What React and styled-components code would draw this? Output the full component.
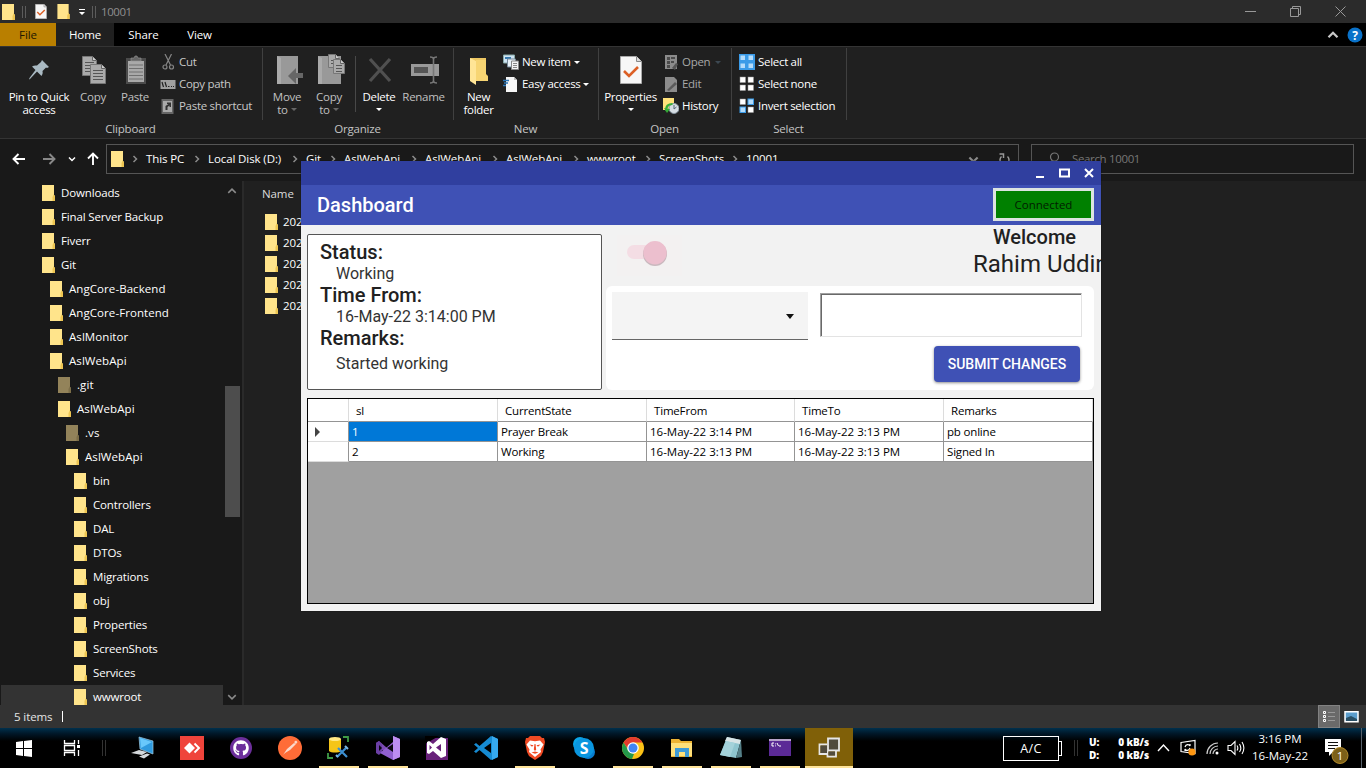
import React from "react";
import styled, { createGlobalStyle } from "styled-components";
import { FaGithub } from "react-icons/fa";

const Global = createGlobalStyle`
  * { box-sizing: border-box; }
  body { margin: 0; background: #000; overflow: hidden; }
  svg { display: block; flex: none; }
`;

const ui = `"Open Sans", "Noto Sans", sans-serif`;

const Desktop = styled.div`
  position: relative;
  width: 1366px;
  height: 768px;
  overflow: hidden;
  display: flex;
  flex-direction: column;
  background: #191919;
  color: #fff;
  font: 11.5px/16px ${ui};
  letter-spacing: -0.1px;
  white-space: nowrap;
`;

/* ---------- Explorer title and tabs ---------- */
const TitleBar = styled.div`
  height: 23px;
  flex: none;
  display: flex;
  align-items: center;
  padding-left: 2px;
  background: #2b2b2b;
  color: #8f8f8f;
`;
const QuickTools = styled.div`
  display: flex;
  align-items: center;
  margin-left: 9px;
  gap: 10px;
`;
const Bars = styled.i`
  width: 4px;
  flex: none;
  height: ${(p) => p.$h || 12}px;
  margin: ${(p) => p.$m};
  border: solid ${(p) => p.$c || "#5c5c5c"};
  border-width: 0 1px;
`;
const Caption = styled.span`
  width: 1144px;
  flex: none;
  letter-spacing: -0.45px;
`;
const CaptionButtons = styled.div`
  display: flex;
  gap: 34px;
`;
const Tabs = styled.div`
  height: 23px;
  flex: none;
  display: flex;
  background: #000;
`;
const Tab = styled.span`
  width: ${(p) => p.$w}px;
  line-height: 24px;
  text-align: center;
  background: ${(p) => p.$bg || "transparent"};
  color: ${(p) => p.$color || "#fff"};
`;
const TabTools = styled.div`
  margin-left: auto;
  display: flex;
  align-items: center;
  gap: 8px;
  padding-right: 3px;
`;

/* ---------- Ribbon ---------- */
const Ribbon = styled.div`
  height: 93px;
  flex: none;
  display: flex;
  background: #202020;
  border-top: 1px solid #343434;
  border-bottom: 1px solid #343434;
  letter-spacing: -0.3px;
`;
const Group = styled.section`
  width: ${(p) => p.$w}px;
  display: flex;
  flex-direction: column;
`;
const GroupTools = styled.div`
  height: 72px;
  margin-top: 1px;
  display: flex;
  padding: 3px 0 0 ${(p) => p.$pad}px;
  border-right: 1px solid #404040;
`;
const GroupName = styled.span`
  text-align: center;
  line-height: 18px;
  letter-spacing: -0.2px;
  padding-right: 2px;
  color: #c4c4c4;
`;
const BigButton = styled.div`
  width: ${(p) => p.$w}px;
  display: flex;
  flex-direction: column;
  align-items: center;
  padding-top: 3px;
  color: ${(p) => (p.$off ? "#c0c0c0" : "#fff")};
  text-align: center;
  line-height: 13px;
`;
const BigIcon = styled.div`
  height: 36px;
  display: flex;
  align-items: flex-start;
  padding: ${(p) => p.$drop || 0}px 0 0 ${(p) => p.$shift || 0}px;
`;
const BigLine = styled.span`
  display: flex;
  align-items: center;
  gap: 3px;
  min-height: 13px;
`;
const Divider = styled.i`
  width: 1px;
  height: 56px;
  margin: 5px 2px 0 5px;
  background: #484848;
`;
const SmallColumn = styled.div`
  display: flex;
  flex-direction: column;
  margin-left: ${(p) => p.$ml || 0}px;
`;
const SmallButton = styled.div`
  height: 22px;
  display: flex;
  align-items: center;
  gap: 3px;
  color: ${(p) => (p.$dim ? "#a8a8a8" : p.$off ? "#c8c8c8" : "#fff")};
`;
const Caret = styled.i`
  border: solid transparent;
  border-width: 3px 3px 0;
  border-top-color: ${(p) => p.$c || "#fff"};
  margin-left: ${(p) => p.$ml || 0}px;
`;

/* ---------- Address row ---------- */
const AddressRow = styled.div`
  height: 42px;
  flex: none;
  display: flex;
  align-items: flex-start;
  padding: 5px 12px 0 12px;
`;
const NavButtons = styled.div`
  width: 94px;
  height: 30px;
  display: grid;
  grid-template-columns: 30px 26px 18px 14px;
  align-items: center;
`;
const AddressBox = styled.div`
  width: 913px;
  height: 30px;
  display: flex;
  align-items: center;
  padding: 0 8px 0 4px;
  border: 1px solid #555;
`;
const Crumb = styled.span`
  width: ${(p) => p.$w}px;
`;
const CrumbSep = styled.span`
  width: 22px;
  display: flex;
  justify-content: center;
`;
const AddressTools = styled.div`
  margin-left: auto;
  display: flex;
  align-items: center;
  gap: 19px;
`;
const SearchBox = styled.div`
  width: 323px;
  height: 30px;
  margin-left: 12px;
  padding-left: 16px;
  display: flex;
  align-items: center;
  gap: 12px;
  border: 1px solid #555;
  color: #777;
  letter-spacing: -0.35px;
`;

/* ---------- Explorer body ---------- */
const Body = styled.div`
  height: 524px;
  flex: none;
  display: flex;
  overflow: hidden;
`;
const Tree = styled.div`
  width: 223px;
  height: 524px;
  overflow: hidden;
`;
const TreeRow = styled.div`
  height: 24px;
  display: flex;
  align-items: center;
  gap: 6px;
  margin-left: 1px;
  padding-left: ${(p) => 41 + p.$level * 8}px;
  letter-spacing: ${(p) => (p.$level === 0 || p.$level === 4 ? -0.15 : 0.07)}px;
  background: ${(p) => (p.$on ? "#333" : "transparent")};
`;
const ScrollBar = styled.div`
  width: 19px;
  display: flex;
  flex-direction: column;
  align-items: center;
  padding: 5px 3px 3px 2px;
`;
const ScrollThumb = styled.i`
  width: 15px;
  height: 131px;
  margin: 190px 0 auto;
  background: #4d4d4d;
`;
const Files = styled.div`
  flex: 1;
  padding: 5px 0 0 19px;
  background: #202020;
  border-left: 2px solid #2a2a2a;
`;
const FilesHeader = styled.div`
  height: 25px;
  margin-left: -1px;
  color: #dcdcdc;
`;
const FileRow = styled.div`
  height: 21px;
  display: flex;
  align-items: center;
  gap: 5px;
  padding-left: 2px;
`;
const StatusBar = styled.div`
  height: 23px;
  flex: none;
  display: flex;
  align-items: center;
  padding: 0 6px 0 14px;
  background: #333;
  color: #e4e4e4;
`;
const StatusCaret = styled.i`
  width: 1px;
  height: 11px;
  margin-left: 10px;
  background: #fff;
`;
const ViewButtons = styled.div`
  margin-left: auto;
  display: flex;
  align-items: center;
  gap: 4px;
`;
const ViewOn = styled.div`
  width: 22px;
  height: 23px;
  display: grid;
  place-items: center;
  background: #6a6a6a;
  border: 1px solid #828282;
`;

/* ---------- Dashboard window ---------- */
const Window = styled.div`
  position: absolute;
  left: 301px;
  top: 161px;
  width: 800px;
  height: 450px;
  overflow: hidden;
  background: #f2f2f2;
  color: #212121;
  font-family: Roboto, sans-serif;
  letter-spacing: 0;
  box-shadow: 0 0 1px #111;
`;
const WindowCaption = styled.div`
  height: 24px;
  display: flex;
  align-items: center;
  justify-content: flex-end;
  gap: 14px;
  padding: 0 7px 1px 0;
  background: #303f9f;
`;
const AppBar = styled.div`
  height: 40px;
  display: flex;
  align-items: center;
  justify-content: space-between;
  padding: 0 7px 0 16px;
  background: #3f51b5;
  color: #fff;
  font-size: 20px;
  font-weight: 500;
`;
const Connected = styled.div`
  width: 101px;
  height: 33px;
  margin-bottom: 2px;
  border: 3px solid #dce4e0;
  background: #008000;
  color: #001c00;
  font: 11.5px/27px ${ui};
  letter-spacing: 0;
  text-align: center;
`;
const WindowBody = styled.div`
  display: grid;
  grid-template-columns: 295px 495px;
  column-gap: 4px;
  padding-left: 6px;
`;
const StatusPanel = styled.div`
  height: 156px;
  margin-top: 9px;
  padding: 5px 0 0 12px;
  background: #fff;
  border: 1px solid #555;
  border-radius: 2px;
`;
const StatusTitle = styled.div`
  height: ${(p) => p.$h || 22}px;
  line-height: 24px;
  font-size: 20px;
  font-weight: 500;
`;
const StatusValue = styled.div`
  height: 21px;
  padding-left: 16px;
  font-size: 16px;
  line-height: 23px;
  color: #333;
`;
const Side = styled.div`
  display: flex;
  flex-direction: column;
`;
const SideTop = styled.div`
  height: 61px;
  display: flex;
  justify-content: space-between;
`;
const ToggleArea = styled.div`
  width: 65px;
  height: 41px;
  margin: 10px 0 0 11px;
  padding: 6px 0 0 7px;
  background: #f3f1f1;
`;
const Greeting = styled.div`
  width: 128px;
  overflow: hidden;
`;
const Welcome = styled.div`
  padding-left: 20px;
  font-size: 20px;
  font-weight: 500;
  line-height: 25px;
`;
const UserName = styled.div`
  font-size: 24px;
  line-height: 28px;
`;
const FormCard = styled.div`
  width: 488px;
  height: 104px;
  padding: 6px 12px 0 6px;
  background: #fff;
  border-radius: 6px;
  display: grid;
  grid-template-columns: 196px 262px;
  grid-template-rows: 48px 44px;
  column-gap: 12px;
`;
const Select = styled.div`
  display: flex;
  align-items: center;
  justify-content: flex-end;
  padding: 2px 14px 0 0;
  background: #f4f4f4;
  border-bottom: 1px solid #666;
`;
const SelectCaret = styled.i`
  border: solid transparent;
  border-width: 5px 4px 0;
  border-top-color: #111;
`;
const TextArea = styled.div`
  height: 44px;
  margin-top: 1px;
  border: 1px solid #e3e3e3;
  border-top-color: #a0a0a0;
  border-left-color: #a0a0a0;
  box-shadow: inset 1px 1px #696969;
`;
const Submit = styled.div`
  grid-column: 2;
  justify-self: end;
  width: 146px;
  height: 36px;
  margin: 6px 2px 0 0;
  border-radius: 4px;
  background: #3f51b5;
  box-shadow: 0 1px 3px rgba(0, 0, 0, 0.45);
  color: #fff;
  font-size: 14px;
  font-weight: 500;
  line-height: 36px;
  text-align: center;
`;
const Grid = styled.div`
  width: 787px;
  height: 206px;
  margin: 8px 0 0 6px;
  background: #a0a0a0;
  border: 1px solid #000;
  color: #000;
  font: 11.5px/19px ${ui};
`;
const GridRow = styled.div`
  height: ${(p) => (p.$head ? 23 : 20)}px;
  width: 785px;
  display: grid;
  grid-template-columns: 41px 149px 149px 148px 149px 149px;
  grid-template-rows: 100%;
  background: #fff;
`;
const Cell = styled.span`
  display: flex;
  align-items: center;
  padding-left: ${(p) => (p.$head ? 7 : 3)}px;
  letter-spacing: ${(p) => (p.$date ? 0 : -0.18)}px;
  border: solid ${(p) => (p.$title ? "#dcdcdc" : "#949494")};
  border-width: 0 1px 1px 0;
  border-bottom-color: ${(p) => (p.$head && !p.$title ? "#dcdcdc" : "#949494")};
  background: ${(p) => (p.$on ? "#0078d7" : "#fff")};
  color: ${(p) => (p.$on ? "#fff" : "#000")};
`;

/* ---------- Taskbar ---------- */
const Taskbar = styled.div`
  height: 40px;
  flex: none;
  display: flex;
  background: linear-gradient(#00304d 0, #001626 6px, #000 13px);
`;
const Slot = styled.div`
  width: ${(p) => p.$w || 49}px;
  height: 40px;
  margin-left: ${(p) => (p.$active ? 1 : 0)}px;
  display: flex;
  flex-direction: column;
  align-items: center;
  justify-content: space-between;
  padding-top: 8px;
  background: ${(p) => (p.$active ? "#806008" : "transparent")};
`;
const Running = styled.i`
  width: ${(p) => (p.$full ? 48 : 40)}px;
  height: 2px;
  background: #ffe49a;
`;
const Tray = styled.div`
  margin-left: auto;
  display: flex;
  align-items: center;
  width: 363px;
`;
const Battery = styled.div`
  width: 56px;
  height: 25px;
  border: 1px solid #fff;
  font-size: 12.5px;
  line-height: 23px;
  letter-spacing: 0.4px;
  text-align: center;
`;
const BatteryTip = styled.i`
  width: 3px;
  height: 15px;
  border: 1px solid #fff;
  border-left: 0;
`;
const Net = styled.div`
  width: 60px;
  display: grid;
  grid-template-columns: 20px 40px;
  margin: 1px 8px 0 11px;
  font-size: 10px;
  font-weight: 700;
  line-height: 13px;
  b:nth-child(even) { text-align: right; }
`;
const Clock = styled.div`
  width: 66px;
  text-align: center;
  line-height: 17px;
  margin: 0 0 2px 2px;
  letter-spacing: 0;
`;
const Notice = styled.div`
  margin: 4px 0 0 11px;
`;
const Peek = styled.i`
  height: 40px;
  width: 1px;
  margin-left: 11px;
  background: #56606a;
`;

/* ---------- Drawings ---------- */
const Folder = ({ dim, w = 13, h = 16 }) => (
  <svg width={w} height={h} viewBox="0 0 13 16">
    <path d="M0 0h12v10l1 1v5H0z" fill={dim ? "#93835a" : "#ffe48b"} />
    <path d="M10.500 16v-4l1.500-3v1l1 1v5z" fill={dim ? "#7c6e48" : "#edc552"} />
  </svg>
);
const NewFolder = () => (
  <svg width="20" height="30" viewBox="0 0 20 30">
    <path d="M1 3h16v16l2 2v5H6z" fill="#edc763" />
    <path d="M1 3l6 3v24l-6-4z" fill="#ffe596" />
    <path d="M7 5h10v15l2 2v4H7z" fill="#f7d573" />
  </svg>
);
const Check = ({ w, h }) => (
  <svg width={w} height={h} viewBox="0 0 22 28">
    <path d="M.5.500h16l5 5v22H.500z" fill="#f7f7f7" stroke="#aaa" />
    <path d="M16.500.500v5h5" fill="#ddd" stroke="#888" />
    <path d="M4 15l5 5 9-9" fill="none" stroke="#dc6026" strokeWidth="2.600" />
  </svg>
);
const Chevron = ({ d = "right", c = "#8a8a8a", s = 8, sw = 1.5 }) => {
  const path = { right: "M2.500 1l3 3-3 3", down: "M1 2.500l3 3 3-3", up: "M1 5.500l3-3 3 3" }[d];
  return (
    <svg width={s} height={s} viewBox="0 0 8 8" fill="none" stroke={c} strokeWidth={sw}>
      <path d={path} />
    </svg>
  );
};
const Arrow = ({ r = 0, c = "#fff" }) => (
  <svg width="14" height="14" viewBox="0 0 14 14" fill="none" stroke={c} strokeWidth="1.900">
    <path transform={`rotate(${r} 7 7)`} d="M13 7H1.500M6.500 2l-5 5 5 5" />
  </svg>
);
const Pin = () => (
  <svg width="20" height="32" viewBox="0 0 20 32">
    <path d="M13 6l7 7-2 1-1-.500-3.500 3.500c.5 2 0 3.500-1 5L8 17.500 1 25l-1 .500.500-1.500L6.500 16 3 12.500c1.500-1 3-1.300 5-1L12 8z" fill="#a9b9c2" />
  </svg>
);
const Sheet = ({ x = 0, y = 0, w = 15, h = 20 }) => (
  <g transform={`translate(${x} ${y})`}>
    <path d={`M.5.500h${w - 5}l4 4v${h - 5}H.500z`} fill="#aaa" stroke="#777" />
    <path d={`M${w - 4.5}.500v4h4`} fill="#ccc" stroke="#666" />
    {[6, 9, 12, 15].filter((v) => v < h - 2).map((v) => (
      <path key={v} d={`M3 ${v + 0.5}h${w - 6}`} stroke="#555" />
    ))}
  </g>
);
const CopyIcon = () => (
  <svg width="24" height="30" viewBox="0 0 24 30"><Sheet y={1} /><Sheet x={8} y={9} w={16} /></svg>
);
const PasteIcon = () => (
  <svg width="20" height="30" viewBox="0 0 20 30">
    <path d="M0 3h20v26H0z" fill="#4b4b4b" />
    <path d="M2 6h16v21H2z" fill="#a9a9a9" />
    <path d="M5 3h3l1-2h2l1 2h3v3H5z" fill="#666" stroke="#999" strokeWidth=".600" />
    <path d="M3 10h14M3 13.500h14M3 17h14M3 20.500h14M3 24h14" stroke="#707070" />
  </svg>
);
const MoveIcon = () => (
  <svg width="26" height="30" viewBox="0 0 26 30">
    <path d="M0 2h21v28H0z" fill="#999" />
    <path d="M0 2l4 2v26H0z" fill="#aaa" />
    <path d="M26 19h-7v-5l-8 8 8 8v-6h7z" fill="#666" />
  </svg>
);
const CopyToIcon = () => (
  <svg width="27" height="30" viewBox="0 0 27 30">
    <path d="M0 2h23v28H0z" fill="#999" /><path d="M0 2l4 2v26H0z" fill="#aaa" />
    <Sheet x={10} y={0} w={12} h={14} /><Sheet x={15} y={5} w={12} h={15} />
  </svg>
);
const DeleteIcon = () => (
  <svg width="24" height="30" viewBox="0 0 24 30" stroke="#505050" strokeWidth="3.200"><path d="M2 5l20 22M22 5L2 27" /></svg>
);
const RenameIcon = () => (
  <svg width="28" height="30" viewBox="0 0 28 30">
    <path d="M0 10h28v12H0z" fill="#999" /><path d="M3 13h14v6H3z" fill="#555" />
    <path d="M19 3c3 0 3.500 1 3.500 2v22c0 1-.5 2-3.500 2M26 3c-3 0-3.500 1-3.500 2v22c0 1 .5 2 3.500 2" fill="none" stroke="#777" strokeWidth="1.600" />
  </svg>
);
const S16 = ({ children }) => <svg width="16" height="16" viewBox="0 0 16 16">{children}</svg>;
const CutIcon = () => (
  <S16><g fill="none" stroke="#858585" strokeWidth="1.200"><path d="M5 0l5.500 11M11.500 0L6 11" /><circle cx="5" cy="13" r="2" /><circle cx="11.500" cy="13" r="2" /></g></S16>
);
const PathIcon = () => (
  <S16><path d="M.5 4h15v9H.500z" fill="#a0a0a0" /><path d="M2 6l1.500 5M5 6l1.500 5M8 10.500h1.500M11 10.500h1M13 10.500h1" stroke="#222" strokeWidth="1.200" /></S16>
);
const ShortcutIcon = () => (
  <S16><path d="M1.500 1h12v15h-12z" fill="#666" /><path d="M3 3h9v11H3z" fill="#aaa" /><path d="M5.500 12V8l3-2H7V4.500h4V9H9.500V7.500L7.500 9v3z" fill="#333" /></S16>
);
const NewItemIcon = () => (
  <S16><path d="M.5 1h11v8H.500z" fill="#cfe4f3" stroke="#8aa" /><path d="M2 4h6" stroke="#3578ae" strokeWidth="2" /><path d="M4.500 5h8v8h-8z" fill="#e8f1f7" stroke="#789" /><path d="M8.500 7h7v8.500h-7z" fill="#f3f3f3" stroke="#888" /><path d="M10 9.500h4M10 11.500h4M10 13.500h4" stroke="#888" /></S16>
);
const EasyIcon = () => (
  <S16><path d="M3 1h8l3 3v12H3z" fill="#f6f6f6" /><path d="M11 1v3h3" fill="#bbb" /><path d="M0 4.500h6M1 7h4M0 9.500h3" stroke="#2a74b5" strokeWidth="1.300" /></S16>
);
const OpenIcon = () => (
  <S16><path d="M2 1h12v14H2z" fill="#8c8c8c" /><path d="M4 3h3v3H4zM4 7h3v3H4zM4 11h3v3H4zM8 3h4v2H8zM8 7h3v2H8z" fill="#4b4b4b" /><path d="M9 14l4-5 2 1-3 6z" fill="#555" /></S16>
);
const EditIcon = () => (
  <S16><path d="M2 1h9l3 3v12H2z" fill="#8c8c8c" /><path d="M4 14l8-8 2 2-8 7z" fill="#5a5a5a" /></S16>
);
const HistoryIcon = () => (
  <S16><path d="M0 0h11v12H0z" fill="#ffe27b" /><circle cx="11" cy="10.500" r="5" fill="#d6dde3" stroke="#8795a0" /><path d="M11 7v4l2.500-2" fill="none" stroke="#567" /><path d="M3.500 13c-1-5 2-7 6-7" fill="none" stroke="#35ad38" strokeWidth="2.200" /><path d="M1 10l3 5 3-4z" fill="#35ad38" /></S16>
);
const Squares = ({ blue }) => (
  <S16>
    {blue === "all" && <path d="M0 0h16v16H0z" fill="#3b9be8" />}
    {[[1, 1], [9, 1], [1, 9], [9, 9]].map(([x, y], i) => {
      const on = blue === "all" || (blue === "some" && (i === 1 || i === 2));
      return <rect key={i} x={x} y={y} width="5.500" height="5.500" fill={on ? "#b5dcfa" : "#fff"} stroke={on ? "#3b9be8" : "#999"} strokeWidth={on ? 1 : 0.5} />;
    })}
  </S16>
);
const S24 = ({ children }) => <svg width="24" height="24" viewBox="0 0 24 24">{children}</svg>;

const taskIcons = {
  pc: <S24><path d="M8 1l14 4v13L9 13z" fill="#2f9ade" stroke="#9dcbe3" strokeWidth=".700" /><path d="M9 2l12 4-11 6z" fill="#69c8fb" /><path d="M0 17l8-3 8 2-5 3zM8 20.500l8-3 3 1-6 4z" fill="#d5d9dc" /></S24>,
  anydesk: <S24><path d="M0 0h24v24H0z" fill="#ef443b" /><path d="M9.500 6.500L15 12l-5.500 5.500L4 12z" fill="#fff" /><path d="M14.500 7.500L19 12l-4.500 4.500" fill="none" stroke="#fff" strokeWidth="1.900" /></S24>,
  github: <S24><circle cx="12" cy="12" r="11" fill="#6c2f9b" /><FaGithub x="4" y="4" size="16" color="#fff" /></S24>,
  postman: <S24><circle cx="12" cy="12" r="12" fill="#ff6c37" /><path d="M5 19l4-6 7-6 2 1-6 6-5 3zM16 6l2-1.500L19.500 6 18 8z" fill="#fbd9cc" /></S24>,
  ssms: <S24><path d="M2 3v12c2 2 10 2 12 0V3z" fill="#f5c518" /><ellipse cx="8" cy="3" rx="6" ry="2" fill="#ffe884" /><path d="M16 1h5v5M1 17v5h5" fill="none" stroke="#3f9b46" strokeWidth="1.800" /><path d="M11 12l9 9M19 12l-9 9" stroke="#3d8fd0" strokeWidth="2.200" /><path d="M18 10l3 3M9 19l2 2" stroke="#79b8e6" strokeWidth="2" /></S24>,
  vs: <S24><path d="M0 7l3-2 15 13V24L0 9z" fill="#7c4bb5" /><path d="M0 7v10l3 2 3-3V9L3 5z" fill="#6b3fa5" /><path d="M17 0l7 3v18l-7 3-13-7 13-11z" fill="#9160d0" /><path d="M17 0l7 3v18l-7 3z" fill="#bd8df2" /><path d="M17 8v8l-6-4z" fill="#0b0612" /><path d="M3 9v6l3-3z" fill="#0b0612" /></S24>,
  vs2: <S24><path d="M1 2h22v22H1z" fill="#68217a" /><path d="M0 0h14L0 8z" fill="#000" /><path fillRule="evenodd" d="M16 1l5 2v17l-5 2-8-7-4 3-2-1V6l2-1 4 3zM16 8l-5 3.500 5 4zM4.500 9v5L7 11.500z" fill="#fff" /></S24>,
  vscode: <S24><path d="M17 0l7 3v18l-7 3L5.500 14 2 17l-2-1.500L4 12 0 8.500 2 7l3.500 3zM17 7l-7 5 7 5z" fill="#168bd2" fillRule="evenodd" /><path d="M18 0l6 3v18l-6 3z" fill="#36a9ee" /></S24>,
  brave: <S24><path d="M7 0h10l2 2 2 0 1 4-2 10-2 4-6 4-6-4-2-4L2 6l1-4h2z" fill="#f04a23" /><path d="M7 4.500l5 .8 5-.8 3.500 4-3 5 .5 2.500-6 5-6-5 .5-2.500-3-5z" fill="#fff" /><path d="M6.500 8.500l4 .8-1.500 1.500zM17.500 8.500l-4 .8 1.500 1.500zM11.500 8h1l.7 5.500L12 15l-1.200-1.500zM8.500 16.500l3.500-1 3.500 1-3.500 1.200z" fill="#f04a23" /></S24>,
  skype: <S24><circle cx="8" cy="8" r="7" fill="#0aa5e8" /><circle cx="16" cy="16" r="7" fill="#087ed1" /><circle cx="12" cy="12" r="10" fill="#0a96df" /><text x="12" y="17.500" textAnchor="middle" fill="#fff" fontFamily="Open Sans" fontWeight="700" fontSize="16">S</text></S24>,
  chrome: <S24><circle cx="12" cy="12" r="11" fill="#fbc116" /><path d="M2.500 6.500A11 11 0 0 1 21.500 6.500H12L8 14.500z" fill="#e33b2e" /><path d="M2.500 6.500L8 15l5 3-2 5A11 11 0 0 1 2.500 6.500z" fill="#24994a" /><circle cx="12" cy="12" r="5.800" fill="#fff" /><circle cx="12" cy="12" r="4.500" fill="#4285f4" /></S24>,
  explorer: <S24><path d="M1 3h8l2 2h11v16H1z" fill="#eeb433" /><path d="M1 7h21v13H1z" fill="#ffe07a" /><path d="M5 21v-9h14v9h-4v-5H9v5z" fill="#3f9bd6" /></S24>,
  notepad: <S24><path d="M8 1l14 3-5 18L1 19z" fill="#8fc5cf" /><path d="M8 1l14 3-1 4L6 5z" fill="#d8e4e6" /><path d="M7 5l9 2-5 14L1 19z" fill="#a4d2da" /><path d="M17 22l5-18 1 17z" fill="#547f87" /></S24>,
  terminal: <S24><path d="M1 3h22v17H1z" fill="#5b2a96" /><path d="M1 3h22v2H1z" fill="#b7a3cb" /><path d="M6 7H4v3h2M7.500 7.500v.8M7.500 9.500v.8M9 7l1.500 3M11 10h2" stroke="#fff" fill="none" /></S24>,
  windows: <S24><path d="M11 2.500h11v12H11z" fill="#514b3c" stroke="#e6e6e6" strokeWidth="1.800" /><path d="M10 8.500H2.500v9.500H10M10.500 15v5.500H19V15" fill="none" stroke="#e6e6e6" strokeWidth="1.800" /><path d="M3.500 9.500H10V17H3.500zM11.500 15.500H18v4h-6.500z" fill="#514b3c" /></S24>,
};

/* ---------- Data ---------- */
const tree = [
  ["Downloads", 0], ["Final Server Backup", 0], ["Fiverr", 0], ["Git", 0],
  ["AngCore-Backend", 1], ["AngCore-Frontend", 1], ["AslMonitor", 1], ["AslWebApi", 1],
  [".git", 2, true], ["AslWebApi", 2], [".vs", 3, true], ["AslWebApi", 3],
  ["bin", 4], ["Controllers", 4], ["DAL", 4], ["DTOs", 4], ["Migrations", 4], ["obj", 4],
  ["Properties", 4], ["ScreenShots", 4], ["Services", 4], ["wwwroot", 4],
];
const crumbs = [
  ["This PC", 40], ["Local Disk (D:)", 76], ["Git", 16], ["AslWebApi", 59], ["AslWebApi", 59],
  ["AslWebApi", 59], ["wwwroot", 50], ["ScreenShots", 65], ["10001", 30],
];
const records = [
  ["1", "Prayer Break", "16-May-22 3:14 PM", "16-May-22 3:13 PM", "pb online"],
  ["2", "Working", "16-May-22 3:13 PM", "16-May-22 3:13 PM", "Signed In"],
];
const tasks = [
  ["pc"], ["anydesk"], ["github"], ["postman"], ["ssms", 1], ["vs", 1], ["vs2"], ["vscode"],
  ["brave", 1], ["skype"], ["chrome", 1], ["explorer", 1], ["notepad", 1], ["terminal", 1],
];

const Big = ({ w, off, icon, a, b, caret, shift, drop }) => (
  <BigButton $w={w} $off={off}>
    <BigIcon $shift={shift} $drop={drop}>{icon}</BigIcon>
    <BigLine>{a}</BigLine>
    <BigLine>{b}{caret && <Caret $c={off ? "#666" : "#fff"} />}</BigLine>
  </BigButton>
);
const RibbonGroup = ({ w, pad, name, children }) => (
  <Group $w={w}>
    <GroupTools $pad={pad}>{children}</GroupTools>
    <GroupName>{name}</GroupName>
  </Group>
);

const ExplorerTop = () => (
  <>
    <TitleBar>
      <Folder />
      <Bars $m="0 0 0 7px" />
      <QuickTools>
        <Check w={12} h={15} />
        <Folder h={15} />
      </QuickTools>
      <Bars $m="0 2px" $c="transparent" />
      <svg width="8" height="8" viewBox="0 0 8 8" fill="#fff"><path d="M1 1h6v1H1zM1 4h6L4 7z" /></svg>
      <Bars $m="0 5px 0 6px" />
      <Caption>10001</Caption>
      <CaptionButtons>
        <svg width="11" height="11" stroke="#999"><path d="M0 5.500h11" /></svg>
        <svg width="11" height="11" fill="none" stroke="#999"><path d="M.5 2.500h8v8h-8zM2.500 2.500v-2h8v8h-2" /></svg>
        <svg width="11" height="11" stroke="#999"><path d="M.5.500l10 10M10.500.500l-10 10" /></svg>
      </CaptionButtons>
    </TitleBar>
    <Tabs>
      <Tab $w={56} $bg="#b97f00" $color="#221700">File</Tab>
      <Tab $w={58} $bg="#202020">Home</Tab>
      <Tab $w={59}>Share</Tab>
      <Tab $w={53}>View</Tab>
      <TabTools>
        <Chevron d="up" c="#c8c8c8" s={12} />
        <svg width="16" height="16" viewBox="0 0 16 16"><circle cx="8" cy="8" r="7.500" fill="#0a72c9" /><text x="8" y="12.500" textAnchor="middle" fontFamily="Open Sans" fontSize="12" fontWeight="700" fill="#fff">?</text></svg>
      </TabTools>
    </Tabs>
    <Ribbon>
      <RibbonGroup w={263} pad={4} name="Clipboard">
        <Big w={70} icon={<Pin />} a="Pin to Quick" b="access" />
        <Big w={38} off shift={2} drop={1} icon={<CopyIcon />} a="Copy" />
        <Big w={46} off shift={2} drop={1} icon={<PasteIcon />} a="Paste" />
        <SmallColumn $ml={2}>
          <SmallButton $off><CutIcon />Cut</SmallButton>
          <SmallButton $off><PathIcon />Copy path</SmallButton>
          <SmallButton $off><ShortcutIcon />Paste shortcut</SmallButton>
        </SmallColumn>
      </RibbonGroup>
      <RibbonGroup w={191} pad={3} name="Organize">
        <Big w={42} off shift={5} icon={<MoveIcon />} a="Move" b="to" caret />
        <Big w={42} off shift={5} icon={<CopyToIcon />} a="Copy" b="to" caret />
        <Divider />
        <Big w={42} shift={2} icon={<DeleteIcon />} a="Delete" caret />
        <Big w={47} off shift={2} icon={<RenameIcon />} a="Rename" />
      </RibbonGroup>
      <RibbonGroup w={145} pad={5} name="New">
        <Big w={39} drop={1} icon={<NewFolder />} a="New" b="folder" />
        <SmallColumn $ml={5}>
          <SmallButton><NewItemIcon />New item<Caret /></SmallButton>
          <SmallButton><EasyIcon />Easy access<Caret $ml={-1} /></SmallButton>
        </SmallColumn>
      </RibbonGroup>
      <RibbonGroup w={133} pad={2} name="Open">
        <Big w={59} drop={2} icon={<Check w={22} h={28} />} a="Properties" caret />
        <SmallColumn $ml={3}>
          <SmallButton $dim><OpenIcon />Open<Caret $c="#3c4852" $ml={2} /></SmallButton>
          <SmallButton $dim><EditIcon />Edit</SmallButton>
          <SmallButton><HistoryIcon />History</SmallButton>
        </SmallColumn>
      </RibbonGroup>
      <RibbonGroup w={115} pad={7} name="Select">
        <SmallColumn>
          <SmallButton><Squares blue="all" />Select all</SmallButton>
          <SmallButton><Squares />Select none</SmallButton>
          <SmallButton><Squares blue="some" />Invert selection</SmallButton>
        </SmallColumn>
      </RibbonGroup>
    </Ribbon>
    <AddressRow>
      <NavButtons>
        <Arrow />
        <Arrow r={180} c="#888" />
        <Chevron d="down" c="#fff" />
        <Arrow r={90} />
      </NavButtons>
      <AddressBox>
        <Folder />
        {crumbs.map(([label, w], i) => (
          <React.Fragment key={i}>
            <CrumbSep><Chevron /></CrumbSep>
            <Crumb $w={w}>{label}</Crumb>
          </React.Fragment>
        ))}
        <AddressTools>
          <Chevron d="down" s={11} />
          <svg width="12" height="12" viewBox="0 0 12 12" fill="none" stroke="#999" strokeWidth="1.500"><path d="M3.500 3.500A4.500 4.500 0 1 0 9.500 3.500M1.500 1h4v4" /></svg>
        </AddressTools>
      </AddressBox>
      <SearchBox>
        <svg width="12" height="14" viewBox="0 0 12 14" fill="none" stroke="#777" strokeWidth="1.200"><circle cx="6.500" cy="5" r="4" /><path d="M4 8.500L1 12" /></svg>
        Search 10001
      </SearchBox>
    </AddressRow>
  </>
);

const Dashboard = () => (
  <Window>
    <WindowCaption>
      <svg width="10" height="10" fill="#fff"><path d="M1 8h8v2H1z" /></svg>
      <svg width="11" height="10" fill="none" stroke="#fff" strokeWidth="2"><path d="M1 1.500h9v7H1z" /></svg>
      <svg width="10" height="10" stroke="#fff" strokeWidth="2"><path d="M1 1l8 8M9 1L1 9" /></svg>
    </WindowCaption>
    <AppBar>Dashboard<Connected>Connected</Connected></AppBar>
    <WindowBody>
      <StatusPanel>
        <StatusTitle>Status:</StatusTitle>
        <StatusValue>Working</StatusValue>
        <StatusTitle>Time From:</StatusTitle>
        <StatusValue>16-May-22 3:14:00 PM</StatusValue>
        <StatusTitle $h={26}>Remarks:</StatusTitle>
        <StatusValue>Started working</StatusValue>
      </StatusPanel>
      <Side>
        <SideTop>
          <ToggleArea>
            <svg width="46" height="28" viewBox="0 0 46 28">
              <rect x="3" y="4" width="32" height="14" rx="7" fill="#f4dde4" />
              <circle cx="31" cy="13" r="12" fill="#c9b8be" />
              <circle cx="31" cy="11.700" r="11.700" fill="#ecbfce" />
            </svg>
          </ToggleArea>
          <Greeting>
            <Welcome>Welcome</Welcome>
            <UserName>Rahim Uddin</UserName>
          </Greeting>
        </SideTop>
        <FormCard>
          <Select><SelectCaret /></Select>
          <TextArea />
          <Submit>SUBMIT CHANGES</Submit>
        </FormCard>
      </Side>
    </WindowBody>
    <Grid>
      <GridRow $head>
        {["", "sl", "CurrentState", "TimeFrom", "TimeTo", "Remarks"].map((h, i) => <Cell key={i} $head $title>{h}</Cell>)}
      </GridRow>
      {records.map((r, i) => (
        <GridRow key={i}>
          <Cell $head>{i === 0 && <svg width="5" height="10" fill="#444"><path d="M0 0l5 5-5 5z" /></svg>}</Cell>
          {r.map((v, j) => <Cell key={j} $date={j === 2 || j === 3} $on={i === 0 && j === 0}>{v}</Cell>)}
        </GridRow>
      ))}
    </Grid>
  </Window>
);

const TaskbarView = () => (
  <Taskbar>
    <Slot $w={48}><S24><path d="M4 6l7-1v7H4zM12 5l8-1v8h-8zM4 13h7v7l-7-1zM12 13h8v8l-8-1z" fill="#fff" /></S24></Slot>
    <Slot $w={47}>
      <S24><path d="M4.500 4v3.500h10V4M4.500 20v-3.500h10V20M4.500 9.500h10v5h-10zM18.500 4v4M18.500 14v6" fill="none" stroke="#fff" strokeWidth="1.300" /><path d="M17 9h3v3h-3z" fill="#fff" /></S24>
    </Slot>
    <Bars $m="12px 12px 0 7px" $h={16} $c="#333" />
    {tasks.map(([name, run]) => (
      <Slot key={name}>{taskIcons[name]}{run && <Running />}</Slot>
    ))}
    <Slot $w={48} $active>{taskIcons.windows}<Running $full /></Slot>
    <Tray>
      <Battery>A/C</Battery>
      <BatteryTip />
      <Bars $m="0 0 0 12px" $h={16} $c="#333" />
      <Net><b>U:</b><b>0 kB/s</b><b>D:</b><b>0 kB/s</b></Net>
      <svg width="13" height="10" fill="none" stroke="#fff" strokeWidth="1.400"><path d="M1 8l5.500-6L12 8" /></svg>
      <svg width="34" height="18" viewBox="0 0 34 18" fill="none" stroke="#fff" strokeWidth="1.200"><path d="M11 3.500l14-2v13l-14-2z" /><path d="M15 8c1-3 4-3 5-1v-2M20 9c-1 3-4 3-5 1v2" /><circle cx="22" cy="13" r="3.600" fill="#ff9711" stroke="none" /></svg>
      <svg width="23" height="18" viewBox="0 0 23 18" fill="none" stroke="#ccc" strokeWidth="1.200"><path d="M3 15A11 11 0 0 1 14 4M6 15a8 8 0 0 1 8-8M9 15a5 5 0 0 1 5-5" /><circle cx="13" cy="14" r="1.500" fill="#fff" stroke="none" /></svg>
      <svg width="18" height="18" viewBox="0 0 18 18" fill="none" stroke="#fff" strokeWidth="1.100"><path d="M1 6.500h3l4-4v13l-4-4H1zM10 6.500c1 1.500 1 3.500 0 5M12.500 5c1.500 2.500 1.500 6 0 8M15 3c2.500 4 2.500 8 0 12" /></svg>
      <Clock>3:16 PM<br />16-May-22</Clock>
      <Notice>
        <svg width="26" height="30" viewBox="0 0 26 30">
          <path d="M1 4h16v13H9l-4 4v-4H1z" fill="#fff" /><path d="M4 7.500h10M4 10.500h10M4 13.500h7" stroke="#111" />
          <circle cx="16" cy="20.500" r="8" fill="#7c6019" stroke="#b58c2b" />
          <text x="16" y="24.500" textAnchor="middle" fontFamily="Open Sans" fontSize="11.500" fill="#fff">1</text>
        </svg>
      </Notice>
      <Peek />
    </Tray>
  </Taskbar>
);

export default function App() {
  return (
    <Desktop>
      <Global />
      <ExplorerTop />
      <Body>
        <Tree>
          {tree.map(([label, level, dim], i) => (
            <TreeRow key={i} $level={level} $on={i === tree.length - 1}><Folder dim={dim} />{label}</TreeRow>
          ))}
        </Tree>
        <ScrollBar>
          <Chevron d="up" s={10} sw={1.2} />
          <ScrollThumb />
          <Chevron d="down" s={10} sw={1.2} />
        </ScrollBar>
        <Files>
          <FilesHeader>Name</FilesHeader>
          {[1, 2, 3, 4, 5].map((n) => <FileRow key={n}><Folder />202</FileRow>)}
        </Files>
      </Body>
      <StatusBar>
        5 items<StatusCaret />
        <ViewButtons>
          <ViewOn><svg width="14" height="13" fill="none" stroke="#fff"><path d="M1.500 1.500h2v2h-2zM1.500 5.500h2v2h-2zM1.500 9.500h2v2h-2z" /><path d="M6 2.500h7M6 6.500h7M6 10.500h7" stroke="#999" /></svg></ViewOn>
          <svg width="16" height="12" viewBox="0 0 16 12"><path d="M1 .75h13v10H1z" fill="#5b9dcc" stroke="#fff" strokeWidth="1.500" /><path d="M2 7l5-2 6 3v2H2z" fill="#294f65" /></svg>
        </ViewButtons>
      </StatusBar>
      <TaskbarView />
      <Dashboard />
    </Desktop>
  );
}
